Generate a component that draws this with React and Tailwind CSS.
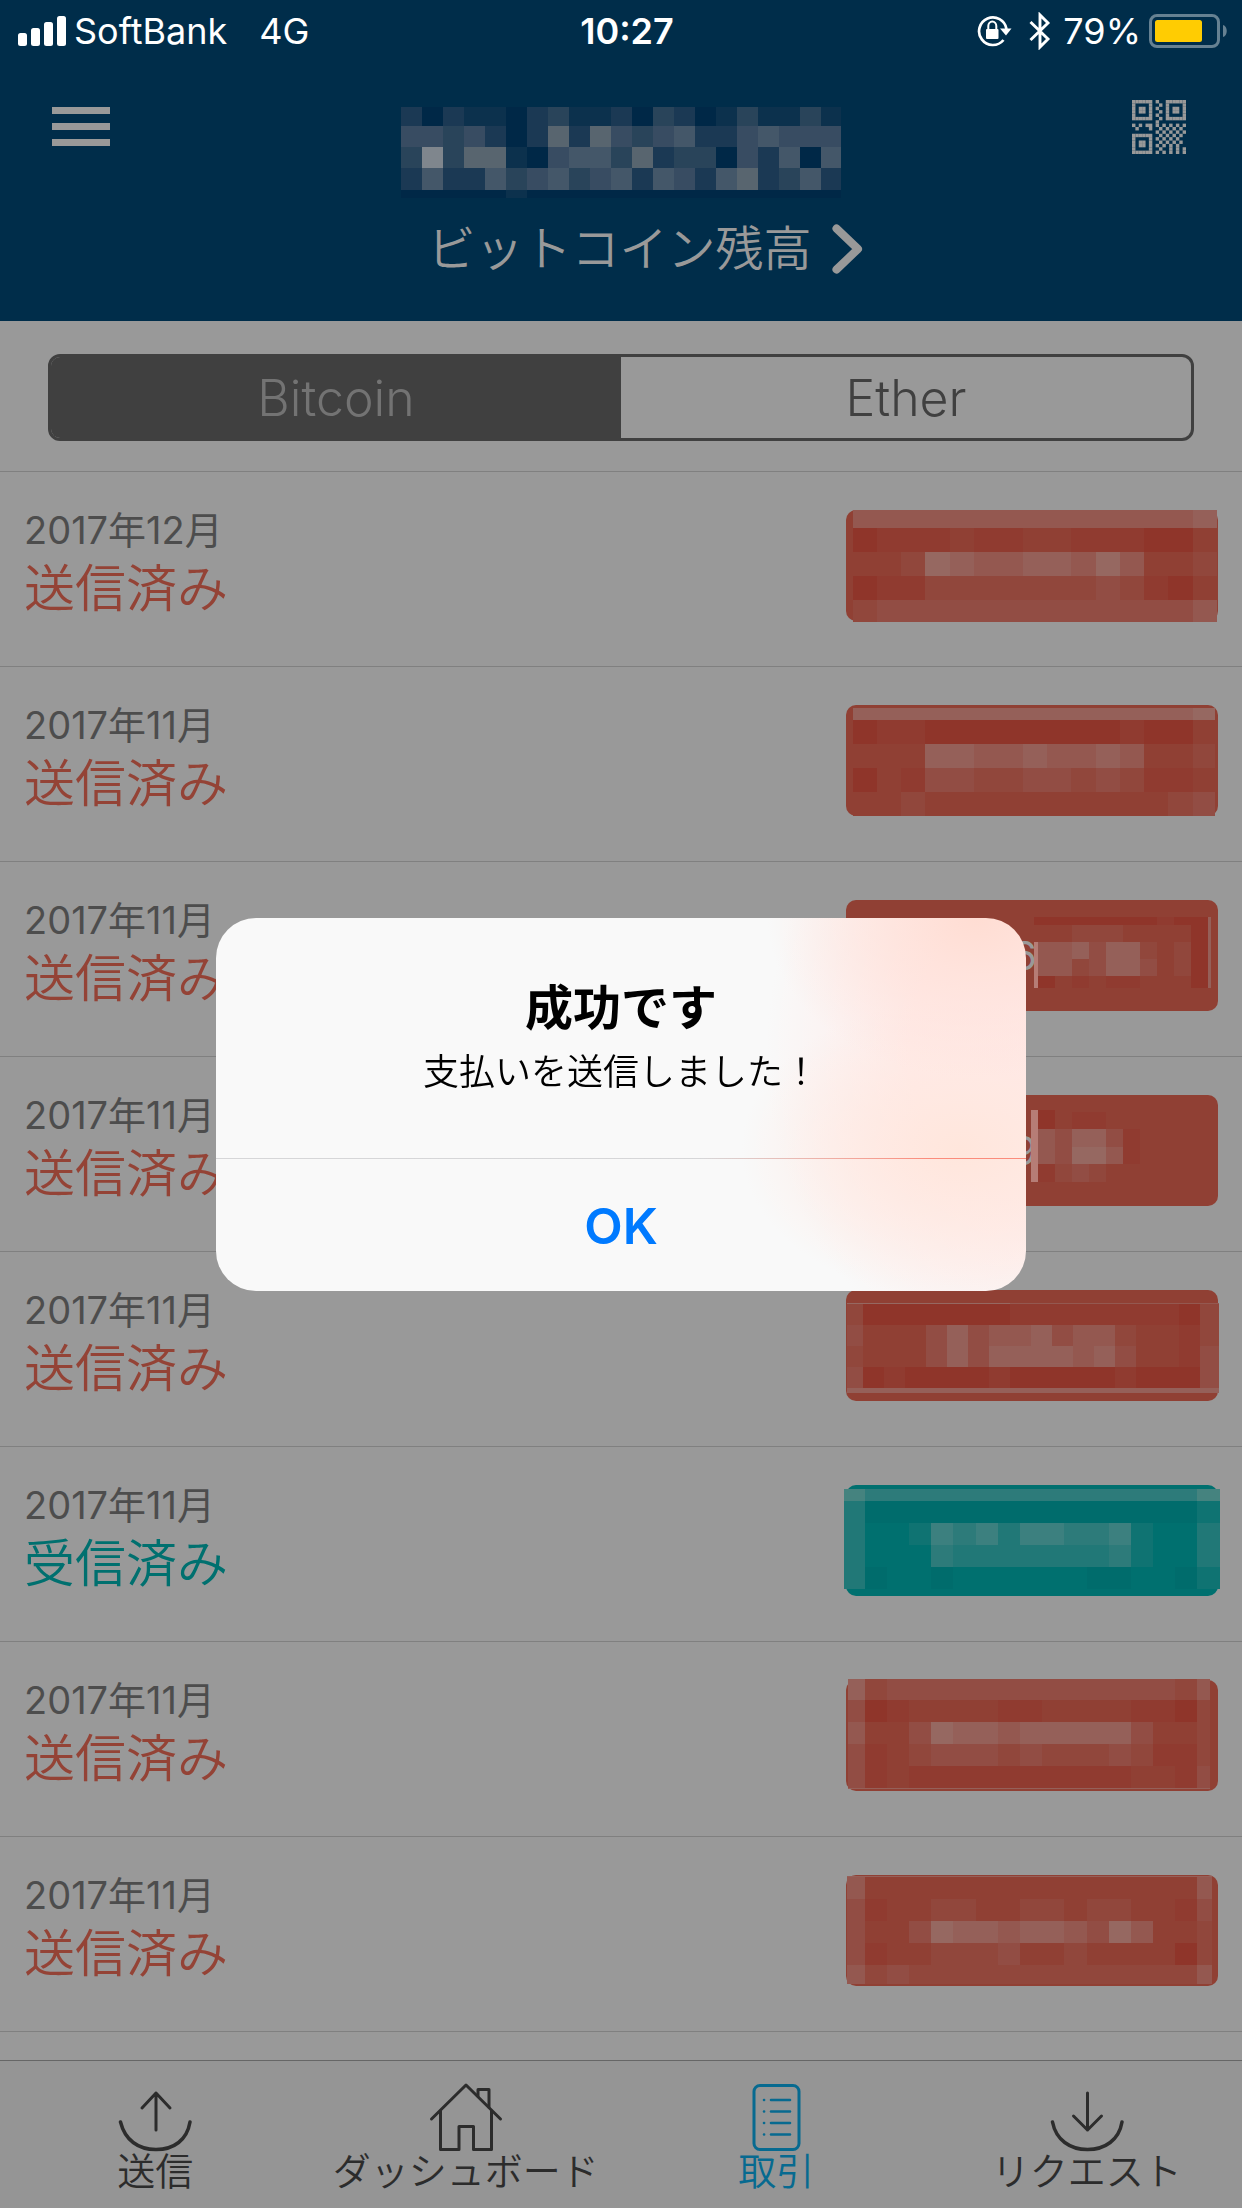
import React from 'react';

const REDS = {
  a: '#8f352a',
  b: '#903b30',
  c: '#904034',
  d: '#91473c',
  e: '#924d44',
  f: '#945850',
  g: '#956059',
  h: '#966861',
  i: '#b67d76'
};

const TEALS = {
  A: '#006c6c',
  B: '#00706f',
  C: '#0f7372',
  D: '#217877',
  E: '#2d7b7a',
  F: '#3c807f',
  G: '#45837f'
};

const BLUES = {
  0: '#002847',
  1: '#0c314d',
  2: '#1b3954',
  3: '#29445a',
  4: '#384c62',
  5: '#445769',
  6: '#58656f',
  7: '#7f868d'
};

const PALETTE = { ...REDS, ...TEALS, ...BLUES };

const WIDE = [7, 31, 55, 79, 104, 128, 152, 177, 201, 225, 250, 274, 298, 322, 347];
const NARROW = [19, 41, 63, 85, 107, 130, 152, 174, 196, 218, 241, 263, 285, 307, 329, 351];

const balanceMosaic = {
  xs: Array.from({ length: 22 }, (_, i) => Math.min(i * 21, 440)),
  ys: [0, 19, 40, 61, 83, 91],
  cells: [
    '202110231120320131131',
    '443420262643452245444',
    '373661045536233042505',
    '252253453452542562352',
    '000001000000000000000'
  ]
};

const transactions = [
  {
    id: 1,
    date: '2017年12月',
    type: 'sent',
    mosaic: {
      xs: [...WIDE, 371],
      ys: [0, 18, 42, 66, 90, 112],
      cells: ['ffffffffffffffg', 'abbbcbbccbbbaac', 'ccdhgffggfhfccd', 'abbdddddddedbac', 'deeeeeeeeeeeeef']
    }
  },
  {
    id: 2,
    date: '2017年11月',
    type: 'sent',
    mosaic: {
      xs: [...WIDE, 369],
      ys: [3, 15, 39, 63, 87, 111],
      cells: ['ggggggggggggggh', 'abbaaaaaaaabaac', 'cccggffgffgfccd', 'acbeeddeededbbc', 'ccdccccccccccde']
    }
  },
  {
    id: 3,
    date: '2017年11月',
    type: 'sent',
    amount: '6',
    mosaic: {
      xs: [188, 192, 209, 226, 243, 260, 277, 294, 311, 328, 345, 362, 365],
      ys: [17, 25, 42, 59, 76, 88],
      cells: ['aaaaaaaabaag', 'cccdddccccag', 'iffgeggdcdag', 'iffdeggecdag', 'iacbcbbcccag']
    }
  },
  {
    id: 4,
    date: '2017年11月',
    type: 'sent',
    amount: '9',
    mosaic: {
      xs: [185, 192, 209, 226, 243, 260, 277, 294, 311, 331],
      ys: [15, 17, 34, 52, 69, 87],
      cells: ['iaccccccc', 'iacbbcccc', 'ifeggebcc', 'ifehhfbcc', 'ibdedcccc']
    }
  },
  {
    id: 5,
    date: '2017年11月',
    type: 'sent',
    mosaic: {
      xs: [1, 17, 38, 59, 80, 101, 122, 143, 164, 185, 206, 227, 248, 269, 290, 312, 333, 354, 373],
      ys: [13, 14, 35, 56, 77, 98, 103],
      cells: [
        'hhhhhhhhffffffffff',
        'daaaaaaabbbbbbbbad',
        'ecccegeffgeffdccbd',
        'dcccegeggggfgeccbe',
        'eabaaaabaaaaabaaae',
        'gggggggggggggggggg'
      ]
    }
  },
  {
    id: 6,
    date: '2017年11月',
    type: 'received',
    mosaic: {
      xs: [-2, ...NARROW, 374],
      ys: [4, 16, 38, 60, 82, 104],
      cells: ['GEEEEEEEEEEEEEEEG', 'DAAAAAAAAAAAAAAAC', 'DBBCFEFDFFEEFCBBD', 'DBBBEDDDDDDDECBBD', 'DABBABBBBBBAABBAC']
    }
  },
  {
    id: 7,
    date: '2017年11月',
    type: 'sent',
    mosaic: {
      xs: [2, ...NARROW, 364],
      ys: [-1, 20, 42, 64, 86, 108, 109],
      cells: [
        'gdeeeeeeeeeeeeedf',
        'eabccccbbccccbbad',
        'fccehggfgggggeccd',
        'ebcdeeededddedbbd',
        'ebcbbbbbbbbbbccbe',
        'ggggggggggggggggg'
      ]
    }
  },
  {
    id: 8,
    date: '2017年11月',
    type: 'sent',
    mosaic: {
      xs: [1, ...NARROW, 366],
      ys: [1, 2, 24, 46, 68, 90, 109],
      cells: [
        'ggggggggggggggggg',
        'fcccccccccccccccf',
        'ebccddccddcddccbe',
        'eccehggfggfehfccd',
        'ebccdddeccdccccad',
        'fdedddddddddddddf'
      ]
    }
  }
];

const Mosaic = ({ xs, ys, cells, className, width, height }) => (
  <svg
    aria-hidden="true"
    className={className}
    width={width}
    height={height}
    viewBox={`0 0 ${width} ${height}`}
    shapeRendering="crispEdges"
  >
    {cells.map((row, r) =>
      row.split('').map((key, c) => (
        <rect
          key={`${r}-${c}`}
          x={xs[c]}
          y={ys[r]}
          width={xs[c + 1] - xs[c]}
          height={ys[r + 1] - ys[r]}
          fill={PALETTE[key]}
        />
      ))
    )}
  </svg>
);

const QR_ROWS = [
  '111111.1..111111',
  '1....1..1.1....1',
  '1.11.1.1..1.11.1',
  '1.11.1..1.1.11.1',
  '1....1.1..1....1',
  '111111..1.111111',
  '.......1........',
  '1.1.11.1.1.1.1.1',
  '.1...1..1.1.1.1.',
  '.......1.1.1.1.1',
  '111111..1.1.1.1.',
  '1....1.1.1.1.1..',
  '1.11.1..1.1.1.1.',
  '1.11.1.1.1.1.1..',
  '1....1..1..1.1.1',
  '111111.1.1.1.1.1'
];

const QrIcon = () => (
  <svg width="54" height="54" viewBox="0 0 16 16" fill="#999999" aria-hidden="true">
    {QR_ROWS.map((row, y) =>
      row.split('').map((v, x) => v === '1' && <rect key={`${x}-${y}`} x={x} y={y} width="1.02" height="1.02" />)
    )}
  </svg>
);

const StatusBar = () => (
  <div className="grid h-[62px] grid-cols-3 items-center pl-[18px] pr-[14px] text-[36px] leading-[62px] text-white">
    <div className="flex items-center">
      <svg width="48" height="30" viewBox="0 0 48 30" fill="currentColor" aria-hidden="true">
        <rect x="0" y="17" width="9" height="13" rx="2.5" />
        <rect x="13" y="12" width="9" height="18" rx="2.5" />
        <rect x="26" y="6" width="9" height="24" rx="2.5" />
        <rect x="39" y="0" width="9" height="30" rx="2.5" />
      </svg>
      <span className="ml-2">SoftBank</span>
      <span className="ml-8">4G</span>
    </div>
    <time className="pl-2 text-center font-semibold">10:27</time>
    <div className="flex items-center justify-end">
      <svg width="36" height="32" viewBox="0 0 36 32" fill="none" aria-hidden="true">
        <path d="M29.500 14A13.800 13.800 0 1 0 26.500 25" stroke="#fff" strokeWidth="2.700" />
        <path d="M23 13.500H34.500L29 20.500Z" fill="#fff" />
        <rect x="9" y="14" width="12.500" height="10" rx="1" fill="#fff" />
        <path d="M11.300 15V11a4 4.500 0 0 1 8 0V15" stroke="#fff" strokeWidth="2" />
      </svg>
      <svg className="ml-4" width="22" height="38" viewBox="0 0 22 38" fill="none" stroke="#fff" strokeWidth="2.900" aria-hidden="true">
        <path d="M1.500 10L19 27L11 35V3L19 11L1.500 28" />
      </svg>
      <span className="ml-3">79%</span>
      <svg className="ml-2" width="79" height="34" viewBox="0 0 79 34" aria-hidden="true">
        <rect x="1.500" y="1.500" width="68" height="31" rx="6.500" fill="none" stroke="#668192" strokeWidth="3" />
        <rect x="6" y="6" width="47" height="22" rx="2.500" fill="#ffcc02" />
        <path d="M74 11c5 1 5 11 0 12Z" fill="#668192" />
      </svg>
    </div>
  </div>
);

const Header = () => (
  <header className="h-[321px] shrink-0 bg-[#002d4a]">
    <StatusBar />
    <div className="flex items-start justify-between pl-[52px] pr-14">
      <button type="button" aria-label="メニュー" className="mt-[45px] flex w-[58px] flex-col gap-[9px]">
        <span className="h-[7px] w-full bg-[#999999]" />
        <span className="h-[7px] w-full bg-[#999999]" />
        <span className="h-[7px] w-full bg-[#999999]" />
      </button>
      <div className="flex flex-col items-center pt-[45px]">
        <Mosaic {...balanceMosaic} width={440} height={91} />
        <button type="button" className="mt-4 flex items-center gap-5 pl-12 text-[48px] leading-[70px] font-[350] whitespace-nowrap text-[#999999]">
          ビットコイン残高
          <svg width="31" height="50" viewBox="0 0 31 50" fill="none" stroke="currentColor" strokeWidth="8" strokeLinecap="round" strokeLinejoin="round" aria-hidden="true">
            <path d="M4.500 4.500L26 25L4.500 45.500" />
          </svg>
        </button>
      </div>
      <button type="button" aria-label="QRコード" className="mt-[38px]">
        <QrIcon />
      </button>
    </div>
  </header>
);

const CoinSwitch = () => (
  <div className="border-b border-[#808080] px-12 pt-[33px] pb-[30px]">
    <div className="grid h-[87px] grid-cols-2 overflow-hidden rounded-[12px] border-3 border-[#404040] text-[50px] leading-[80px] font-light">
      <button type="button" aria-pressed="true" className="bg-[#404040] text-[#737373]">Bitcoin</button>
      <button type="button" aria-pressed="false" className="text-[#404040]">Ether</button>
    </div>
  </div>
);

const TransactionRow = ({ date, type, amount, mosaic }) => {
  const sent = type === 'sent';

  return (
    <li className="flex h-[195px] shrink-0 items-start justify-between border-b border-[#808080] px-6 pt-[38px]">
      <div>
        <p className="text-[38px] leading-[40px] text-[#4d4d4d]">{date}</p>
        <p className={`text-[51px] leading-[78px] font-[350] ${sent ? 'text-[#944336]' : 'text-[#00706f]'}`}>
          {sent ? '送信済み' : '受信済み'}
        </p>
      </div>
      <div className={`relative flex h-[111px] w-[372px] items-center rounded-[10px] pl-[166px] text-[40px] text-[#999999] ${sent ? 'bg-[#904034]' : 'bg-[#00706f]'}`}>
        {amount}
        <Mosaic {...mosaic} width={372} height={111} className="absolute inset-0 overflow-visible" />
      </div>
    </li>
  );
};

const SendIcon = () => (
  <svg width="74" height="70" viewBox="0 0 74 70" fill="none" stroke="currentColor" strokeLinecap="round" strokeLinejoin="round" aria-hidden="true">
    <path d="M2.500 40C7 58 20 67.500 38 67.500S69 58 72 40" strokeWidth="3.500" />
    <path d="M38 48V11M24 26L38 11L52 26" strokeWidth="3" />
  </svg>
);

const HomeIcon = () => (
  <svg width="74" height="70" viewBox="0 0 74 70" fill="none" stroke="currentColor" strokeWidth="3" strokeLinecap="round" strokeLinejoin="round" aria-hidden="true">
    <path d="M2.500 37L37 3L71.500 37" />
    <path d="M49 14V7.500H60V25" />
    <path d="M11.500 29V67.500H30V44.500H44.500V67.500H62.500V29" />
  </svg>
);

const ListIcon = () => (
  <svg width="74" height="70" viewBox="0 0 74 70" fill="none" stroke="currentColor" strokeWidth="3" strokeLinecap="round" aria-hidden="true">
    <rect x="15" y="3.500" width="45" height="64" rx="6" />
    <path d="M25 18h.1M32 18h19M25 29.500h.1M32 29.500h19M25 41h.1M32 41h19M25 52.500h.1M32 52.500h19" strokeWidth="2.600" />
  </svg>
);

const RequestIcon = () => (
  <svg width="74" height="70" viewBox="0 0 74 70" fill="none" stroke="currentColor" strokeLinecap="round" strokeLinejoin="round" aria-hidden="true">
    <path d="M2.500 40C6 58 20 67.500 37.500 67.500S69 58 72 40" strokeWidth="3.500" />
    <path d="M37.500 11V48M23.500 34L37.500 48L51.500 34" strokeWidth="3" />
  </svg>
);

const tabs = [
  { label: '送信', icon: SendIcon },
  { label: 'ダッシュボード', icon: HomeIcon },
  { label: '取引', icon: ListIcon, active: true },
  { label: 'リクエスト', icon: RequestIcon }
];

const TabBar = () => (
  <nav className="grid h-[148px] shrink-0 grid-cols-4 border-t border-[#666666] bg-[#959595]">
    {tabs.map(({ label, icon: Icon, active }) => (
      <a
        key={label}
        href="#"
        className={`flex flex-col items-center pt-[21px] text-[38px] leading-[38px] font-[350] whitespace-nowrap ${active ? 'text-[#076a90]' : 'text-[#2c2c2c]'}`}
      >
        <Icon />
        <span>{label}</span>
      </a>
    ))}
  </nav>
);

const SuccessDialog = () => (
  <div className="fixed inset-0 flex items-center justify-center">
    <div
      role="alertdialog"
      aria-labelledby="dialog-title"
      aria-describedby="dialog-message"
      className="w-[810px] max-w-full overflow-hidden rounded-[40px] bg-[#f9f9f9] bg-[radial-gradient(ellipse_210px_160px_at_94%_0%,#ffddd3_0%,#ffe1d9cc_35%,#ffeae800_100%),radial-gradient(ellipse_220px_150px_at_92%_62%,#ffe6dc_0%,#ffe8e0cc_35%,#ffeae800_100%),radial-gradient(ellipse_260px_320px_at_100%_36%,#ffe9e8_0%,#ffebe9_45%,#f9f9f900_100%)] text-center text-black"
    >
      <div className="pt-[54px] pb-[58px]">
        <h2 id="dialog-title" className="text-[48px] leading-[72px] font-bold">成功です</h2>
        <p id="dialog-message" className="text-[36px] leading-[56px] font-[350]">支払いを送信しました！</p>
      </div>
      <div className="h-px bg-linear-to-r from-[#d6d6d8] from-60% to-[#fb8c7c] to-88%" />
      <button type="button" className="block h-[132px] w-full pt-1 text-[50px] font-semibold text-[#007aff]">OK</button>
    </div>
  </div>
);

const App = () => (
  <div className="flex h-screen flex-col overflow-hidden bg-[#999999] font-['Inter','Noto_Sans_CJK_JP',sans-serif]">
    <Header />
    <CoinSwitch />
    <ul className="flex min-h-0 flex-1 flex-col overflow-hidden">
      {transactions.map((tx) => (
        <TransactionRow key={tx.id} {...tx} />
      ))}
    </ul>
    <TabBar />
    <SuccessDialog />
  </div>
);

export default App;
